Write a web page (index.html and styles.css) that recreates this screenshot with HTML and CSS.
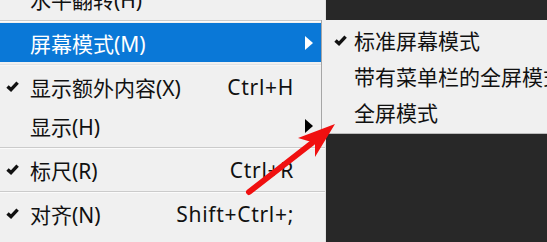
FILE: index.html
```html
<!DOCTYPE html>
<html>
<head>
<meta charset="utf-8">
<title>屏幕模式</title>
<link rel="stylesheet" href="styles.css">
</head>
<body>
<div class="screen">
  <div class="menu">
    <div class="item"><span class="check"></span><span class="label">水平翻转(H)</span><span class="key"></span><span class="more"></span></div>
    <div class="sep"></div>
    <div class="item active"><span class="check"></span><span class="label">屏幕模式(M)</span><span class="key"></span><span class="more"><i class="tri"></i></span></div>
    <div class="sep faint"></div>
    <div class="item"><span class="check"><svg viewBox="0 0 13 11" width="13" height="11"><path d="M1.5 5.4 L5 8.6 L11.6 1.6"/></svg></span><span class="label">显示额外内容(X)</span><span class="key">Ctrl+H</span><span class="more"></span></div>
    <div class="item"><span class="check"></span><span class="label">显示(H)</span><span class="key"></span><span class="more"><i class="tri"></i></span></div>
    <div class="sep"></div>
    <div class="item"><span class="check"><svg viewBox="0 0 13 11" width="13" height="11"><path d="M1.5 5.4 L5 8.6 L11.6 1.6"/></svg></span><span class="label">标尺(R)</span><span class="key">Ctrl+R</span><span class="more"></span></div>
    <div class="sep"></div>
    <div class="item"><span class="check"><svg viewBox="0 0 13 11" width="13" height="11"><path d="M1.5 5.4 L5 8.6 L11.6 1.6"/></svg></span><span class="label">对齐(N)</span><span class="key">Shift+Ctrl+;</span><span class="more"></span></div>
  </div>

  <div class="submenu">
    <div class="subitem"><span class="check"><svg viewBox="0 0 13 11" width="13" height="11"><path d="M1.5 5.4 L5 8.6 L11.6 1.6"/></svg></span><span class="label">标准屏幕模式</span></div>
    <div class="subitem"><span class="check"></span><span class="label">带有菜单栏的全屏模式</span></div>
    <div class="subitem"><span class="check"></span><span class="label">全屏模式</span></div>
  </div>

  <svg class="pointer" width="547" height="242" viewBox="0 0 547 242">
    <line x1="249" y1="192" x2="312" y2="143" stroke="#f01010" stroke-width="6" stroke-linecap="round"/>
    <polygon points="335,124 315,157 315,143 298,138" fill="#f01010"/>
  </svg>
</div>
</body>
</html>
```

FILE: styles.css
```css
body {
  margin: 0;
  background: #282828;
  font-family: "Noto Sans", "Noto Sans CJK SC", sans-serif;
  font-size: 21px;
  color: #111;
}

.screen {
  position: relative;
  width: 547px;
  height: 242px;
  overflow: hidden;
}

.menu {
  display: flex;
  flex-direction: column;
  width: 325px;
  height: 270px;
  margin-top: -21px;
  background: #f0f0f0;
  border-right: 1px solid #e2e2e2;
}

.item {
  display: flex;
  align-items: center;
  height: 39px;
  flex: none;
  box-sizing: border-box;
}
.item.active {
  background: #0a78d7;
  color: #fff;
}

.check {
  width: 30px;
  flex: none;
  display: flex;
  align-items: center;
  padding-left: 6px;
  box-sizing: border-box;
}
.check svg path {
  fill: none;
  stroke: #111;
  stroke-width: 3.4;
  stroke-linejoin: miter;
}

.label { flex: 1; white-space: nowrap; }
.key {
  white-space: nowrap;
  letter-spacing: 0.7px;
}

.more {
  width: 31px;
  flex: none;
  display: flex;
  padding-left: 11px;
  box-sizing: border-box;
}
.tri {
  width: 0;
  height: 0;
  border-left: 8px solid #000;
  border-top: 7px solid transparent;
  border-bottom: 7px solid transparent;
}
.active .tri { border-left-color: #fff; }

.sep {
  flex: none;
  height: 1px;
  margin: 2px 0 1px;
  background: #cbcbcb;
  border-bottom: 1px solid #fbfbfb;
}
.sep.faint {
  background: #e3e3e3;
  border-bottom-color: #f6f6f6;
}

.submenu {
  position: absolute;
  left: 321px;
  top: 20px;
  width: 260px;
  padding: 2px 0 3px;
  background: #f0f0f0;
  border-left: 1px solid #a6a6a6;
  border-bottom: 1px solid #bcbcbc;
}
.subitem {
  display: flex;
  align-items: center;
  height: 36px;
  box-sizing: border-box;
}
.subitem .check {
  width: 32px;
  padding-left: 12px;
}

.pointer {
  position: absolute;
  left: 0;
  top: 0;
  pointer-events: none;
}
```
